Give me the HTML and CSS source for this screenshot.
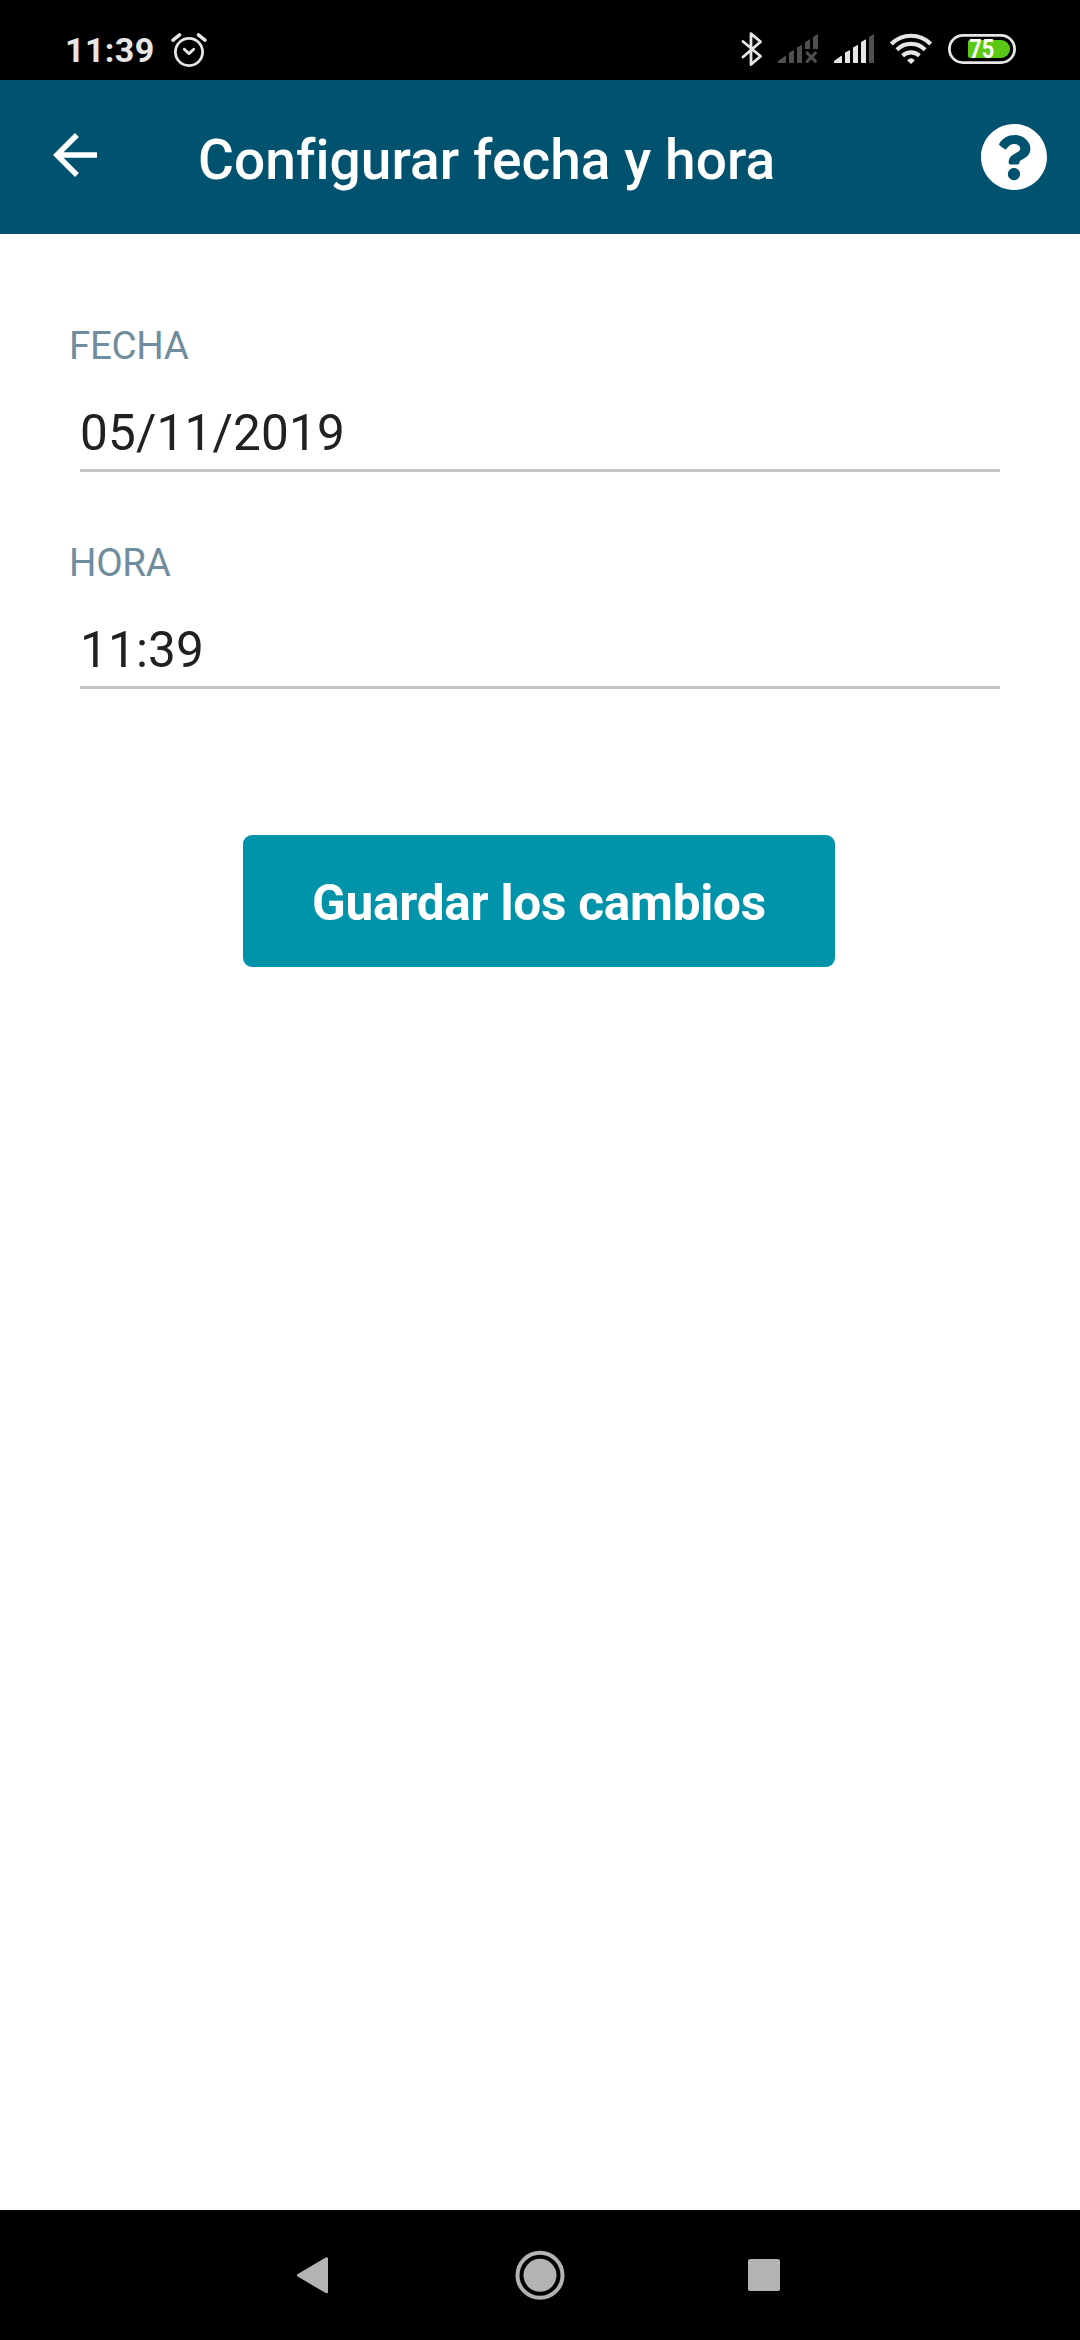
FILE: index.html
```html
<!DOCTYPE html>
<html lang="es">
<head>
<meta charset="utf-8">
<title>Configurar fecha y hora</title>
<link rel="stylesheet" href="styles.css">
</head>
<body>
<div class="screen">
  <div class="status-bar">
    <span class="clock">11:39</span>
    <svg class="alarm" width="40" height="80" viewBox="169 0 40 80" fill="none" stroke="#e6e6e6" stroke-linecap="round" stroke-linejoin="round">
      <circle cx="189" cy="52" r="13.6" stroke-width="2.8"/>
      <path d="M184.3 49.3L189 53.6L193.7 49.3" stroke-width="2.9"/>
      <path d="M173 40.2L179.6 34.8M198.4 34.8L205 40.2" stroke-width="3.5"/>
    </svg>
    <div class="indicators">
      <svg width="24" height="80" viewBox="740 0 24 80" fill="none" stroke="#e6e6e6" stroke-width="2.8" stroke-linecap="round" stroke-linejoin="round">
        <path d="M743 41.5L760.6 56.3L751 64.5V33.6L760.6 41.7L743 57"/>
      </svg>
      <svg class="sim-off" width="42" height="80" viewBox="777 0 42 80" fill="#4f4f4f">
        <path d="M778 63V61L785 56Q786 55.5 786 56.5V63ZM789 63V52.5L794 50V63ZM797 63V47.5L802 44.8V63ZM805 49V42L810 39.2V49ZM813 49V37L818 34V49Z"/>
        <path d="M807.2 53L815.4 61.3M815.4 53L807.2 61.3" stroke="#4f4f4f" stroke-width="3.2" stroke-linecap="round"/>
      </svg>
      <svg class="sim-on" width="42" height="80" viewBox="833 0 42 80" fill="#e6e6e6">
        <path d="M834 63V61L841 56Q842 55.5 842 56.5V63ZM845 63V52.5L850 50V63ZM853 63V47.5L858 44.8V63ZM861 63V42L866 39.2V63Z"/>
        <path d="M869 63V37L874 34V63Z" fill="#4f4f4f"/>
      </svg>
      <svg class="wifi" width="44" height="80" viewBox="889 0 44 80" fill="none" stroke="#e6e6e6" stroke-width="4.1">
        <path d="M891.3 44A27.5 27.5 0 0 1 930.7 44M896.9 49.7A20 20 0 0 1 925.1 49.7M902.6 55.7A12.2 12.2 0 0 1 919.4 55.7"/>
        <path d="M907.2 60.4Q911 56 914.8 60.4L911 64Z" fill="#e6e6e6" stroke="none"/>
      </svg>
      <svg class="battery" width="68" height="80" viewBox="948 0 68 80">
        <rect x="949.4" y="35.4" width="65.2" height="27.2" rx="13.6" fill="none" stroke="#e6e6e6" stroke-width="2.8"/>
        <path d="M970 40H1001A9 9 0 0 1 1001 58H970Q968 58 968 56V42Q968 40 970 40Z" fill="#5ac814"/>
        <text class="battery-level" x="969.3" y="58" textLength="25" lengthAdjust="spacingAndGlyphs">75</text>
      </svg>
    </div>
  </div>

  <header class="app-bar">
    <svg class="back" width="66" height="66" viewBox="0 0 24 24" fill="#fff"><path d="M20 11H7.83l5.59-5.59L12 4l-8 8 8 8 1.41-1.41L7.83 13H20v-2z"/></svg>
    <h1 class="title">Configurar fecha y hora</h1>
    <svg class="help" width="66" height="66" viewBox="8 8 496 496" fill="#fff"><path d="M504 256c0 136.997-111.043 248-248 248S8 392.997 8 256C8 119.083 119.043 8 256 8s248 111.083 248 248zM262.655 90c-54.497 0-89.255 22.957-116.549 63.758-3.536 5.286-2.353 12.415 2.715 16.258l34.699 26.31c5.205 3.947 12.621 3.008 16.665-2.122 17.864-22.658 30.113-35.797 57.303-35.797 20.429 0 45.698 13.148 45.698 32.958 0 14.976-12.363 22.667-32.534 33.976C247.128 238.528 216 254.941 216 296v4c0 6.627 5.373 12 12 12h56c6.627 0 12-5.373 12-12v-1.333c0-28.462 83.186-29.647 83.186-106.667 0-58.002-60.165-102-116.531-102zM256 338c-25.365 0-46 20.635-46 46 0 25.364 20.635 46 46 46s46-20.636 46-46c0-25.365-20.635-46-46-46z"/></svg>
  </header>

  <main class="form">
    <div class="field">
      <div class="label">FECHA</div>
      <div class="value">05/11/2019</div>
    </div>
    <div class="field">
      <div class="label">HORA</div>
      <div class="value">11:39</div>
    </div>
    <button class="save" type="button">Guardar los cambios</button>
  </main>

  <nav class="nav-bar">
    <svg width="32" height="40" viewBox="0 0 32 40"><path d="M2.5 20.3L30.5 3.8V36.8Z" fill="#b3b3b3" stroke="#b3b3b3" stroke-width="3" stroke-linejoin="round"/></svg>
    <svg class="home" width="50" height="50" viewBox="0 0 50 50"><circle cx="25" cy="25.3" r="22.5" fill="none" stroke="#b3b3b3" stroke-width="4"/><circle cx="25" cy="25.3" r="16.5" fill="#b3b3b3"/></svg>
    <span class="recents"></span>
  </nav>
</div>
</body>
</html>
```
FILE: styles.css
```css
* { box-sizing: border-box; }

body {
  margin: 0;
  background: #fff;
  font-family: Roboto, "Noto Sans", sans-serif;
}

svg { display: block; flex: none; }

.screen {
  display: flex;
  flex-direction: column;
  width: 1080px;
  height: 2340px;
  overflow: hidden;
}

.status-bar {
  display: flex;
  align-items: center;
  height: 80px;
  padding: 0 64px 0 65px;
  background: #000;
}

.clock {
  width: 104px;
  padding-top: 20px;
  color: #e6e6e6;
  font-size: 34px;
  font-weight: 700;
  line-height: 40px;
  letter-spacing: 0.4px;
}

.indicators { display: flex; margin-left: auto; }
.sim-off { margin-left: 13px; }
.sim-on { margin-left: 14px; }
.wifi { margin-left: 14px; }
.battery { margin-left: 15px; }

.battery-level {
  fill: #fff;
  font-size: 25px;
  font-weight: 700;
}

.app-bar {
  display: flex;
  align-items: center;
  height: 154px;
  padding: 0 33px 0 42px;
  background: #00526f;
}

.back { margin-bottom: 4px; }

.title {
  flex: 1;
  margin: 0;
  padding: 6px 0 0 90px;
  color: #fff;
  font-size: 55px;
  font-weight: 500;
  line-height: 80px;
  letter-spacing: 0.08px;
}

.form {
  display: flex;
  flex: 1;
  flex-direction: column;
  padding: 89px 80px 0;
}

.field + .field { margin-top: 68px; }

.label {
  margin-left: -11px;
  color: #6f8d9e;
  font-size: 38.5px;
  line-height: 46px;
  letter-spacing: -0.3px;
}

.value {
  margin-top: 34px;
  padding-bottom: 6px;
  border-bottom: 3px solid #c5c5c5;
  color: #212121;
  font-size: 49.5px;
  line-height: 60px;
  letter-spacing: 0.15px;
}

.save {
  width: 592px;
  height: 132px;
  margin: 146px 0 0 163px;
  padding: 4px 0 0;
  border: 0;
  border-radius: 9px;
  background: #0093aa;
  color: #fff;
  font-family: inherit;
  font-size: 49.5px;
  font-weight: 700;
  line-height: 60px;
  letter-spacing: -0.25px;
}

.nav-bar {
  display: flex;
  align-items: center;
  height: 130px;
  padding-left: 296px;
  background: #000;
}

.home { margin-left: 187px; }

.recents {
  width: 32px;
  height: 32px;
  margin-left: 183px;
  border-radius: 2px;
  background: #b3b3b3;
}
```
